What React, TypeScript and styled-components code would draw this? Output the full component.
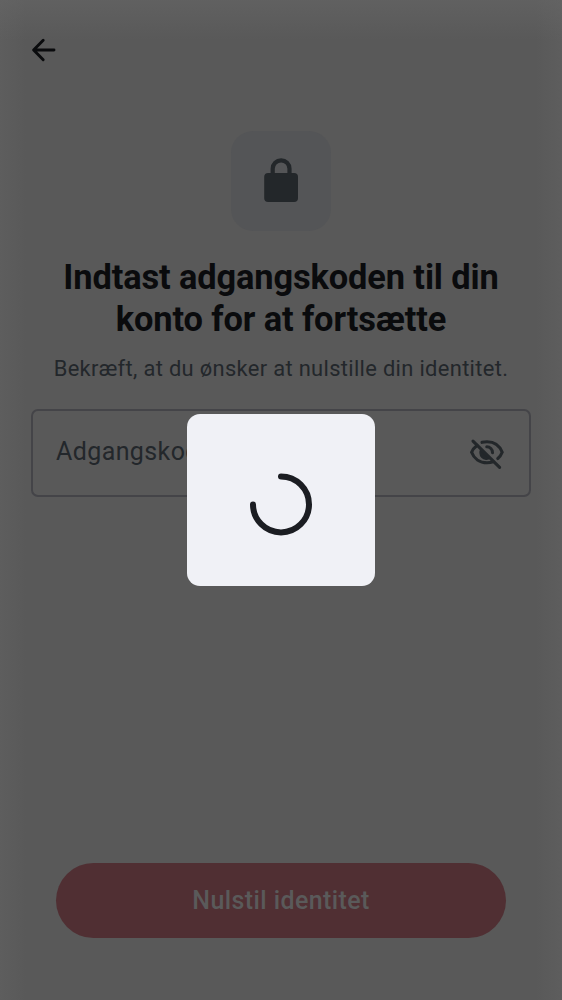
import React from "react";
import styled, { createGlobalStyle } from "styled-components";

const GlobalStyle = createGlobalStyle`
  * { box-sizing: border-box; }
  body { margin: 0; background: #595959; font-family: Roboto, sans-serif; }
`;

const Screen = styled.main`
  position: relative;
  width: 562px;
  height: 1000px;
  display: flex;
  flex-direction: column;
  padding: 0 31px;
  overflow: hidden;
  background:
    linear-gradient(to bottom, rgba(104, 104, 104, 0.5), rgba(90, 90, 90, 0) 40px),
    linear-gradient(to right, rgba(98, 98, 98, 0.5), rgba(90, 90, 90, 0) 26px),
    linear-gradient(to left, rgba(98, 98, 98, 0.5), rgba(90, 90, 90, 0) 26px),
    #595959;
`;

const TopBar = styled.header`
  height: 100px;
  display: flex;
`;

const BackButton = styled.button`
  width: 25px;
  height: 24px;
  margin-top: 38px;
  padding: 0;
  border: 0;
  background: none;
`;

const Content = styled.section`
  display: flex;
  flex-direction: column;
  align-items: center;
  padding-top: 31px;
`;

const LockTile = styled.div`
  width: 100px;
  height: 100px;
  border-radius: 22px;
  background: #545557;
`;

const Title = styled.h1`
  margin: 25px 0 0;
  font-size: 34.4px;
  line-height: 42px;
  letter-spacing: -0.12px;
  font-weight: 700;
  color: #0a0b0d;
  text-align: center;
  white-space: nowrap;
`;

const Subtitle = styled.p`
  margin: 13px 0 0;
  font-size: 21.9px;
  line-height: 31px;
  letter-spacing: 0.33px;
  color: #23272b;
  white-space: nowrap;
`;

const Field = styled.div`
  width: 500px;
  height: 88px;
  margin-top: 25px;
  padding: 0 24px 3px 23px;
  display: flex;
  align-items: center;
  justify-content: space-between;
  border: 2px solid #444448;
  border-radius: 7px;
`;

const Placeholder = styled.span`
  font-size: 25px;
  letter-spacing: 0.4px;
  color: #23272b;
`;

const ResetButton = styled.button`
  width: 450px;
  height: 75px;
  margin: auto auto 62.5px;
  padding: 1px 0 0;
  border: 0;
  border-radius: 38px;
  background: #502f33;
  color: #5a5a5a;
  font: 500 25px Roboto, sans-serif;
  letter-spacing: 0.4px;
`;

const Dialog = styled.div`
  position: absolute;
  left: 187px;
  top: 414px;
  width: 188px;
  height: 172px;
  display: grid;
  place-items: center;
  padding-top: 9px;
  border-radius: 13px;
  background: #f0f1f6;
`;

const Icon = styled.svg`
  display: block;
  flex: none;
  overflow: visible;
`;

export default function App() {
  return (
    <>
      <GlobalStyle />
      <Screen>
        <TopBar>
          <BackButton aria-label="Tilbage">
            <Icon width="25" height="24" viewBox="0 0 25 24" fill="none" stroke="#0a0b0d" strokeWidth="2.9" strokeLinecap="round" strokeLinejoin="round">
              <path d="M12.2 2.3 2.6 12l9.6 9.7M2.8 12h20.2" />
            </Icon>
          </BackButton>
        </TopBar>
        <Content>
          <LockTile>
            <Icon width="100" height="100" viewBox="0 0 100 100">
              <rect x="33.2" y="42" width="33.8" height="29" rx="4" fill="#23272a" />
              <path d="M41.7 44v-6.3a8.4 8.4 0 0 1 16.8 0V44" fill="none" stroke="#23272a" strokeWidth="4.2" />
            </Icon>
          </LockTile>
          <Title>
            Indtast adgangskoden til din
            <br />
            konto for at fortsætte
          </Title>
          <Subtitle>Bekræft, at du ønsker at nulstille din identitet.</Subtitle>
          <Field>
            <Placeholder>Adgangskode</Placeholder>
            <Icon width="36" height="32" viewBox="0 0 36 32" fill="none" stroke="#23272a" strokeLinecap="round">
              <path d="M13 6.3c1.6-.4 3.2-.6 5-.6 7.2 0 12.8 4.2 15.2 10.6-1 2.6-2.4 4.6-4.4 6.2M8 9.4c-2.5 1.8-4.3 4-5.4 6.9C5 22.7 10.8 26.8 18 26.8c2.2 0 4.2-.3 6-1" strokeWidth="3.1" />
              <path d="M12 12.2a7.2 7.2 0 0 0 9.8 10.4Z" fill="#23272a" stroke="none" />
              <path d="M17.8 10.8a5.7 5.7 0 0 1 5.7 5.8" strokeWidth="3.1" />
              <path d="m4 5.2 26.6 26.2" strokeWidth="3.1" />
            </Icon>
          </Field>
        </Content>
        <ResetButton>Nulstil identitet</ResetButton>
        <Dialog role="status" aria-label="Indlæser">
          <Icon width="62" height="63" viewBox="0 0 62 63">
            <path d="M31 3.4A28 28 0 1 1 3 31.4" fill="none" stroke="#1b1d22" strokeWidth="6" strokeLinecap="round" />
          </Icon>
        </Dialog>
      </Screen>
    </>
  );
}
